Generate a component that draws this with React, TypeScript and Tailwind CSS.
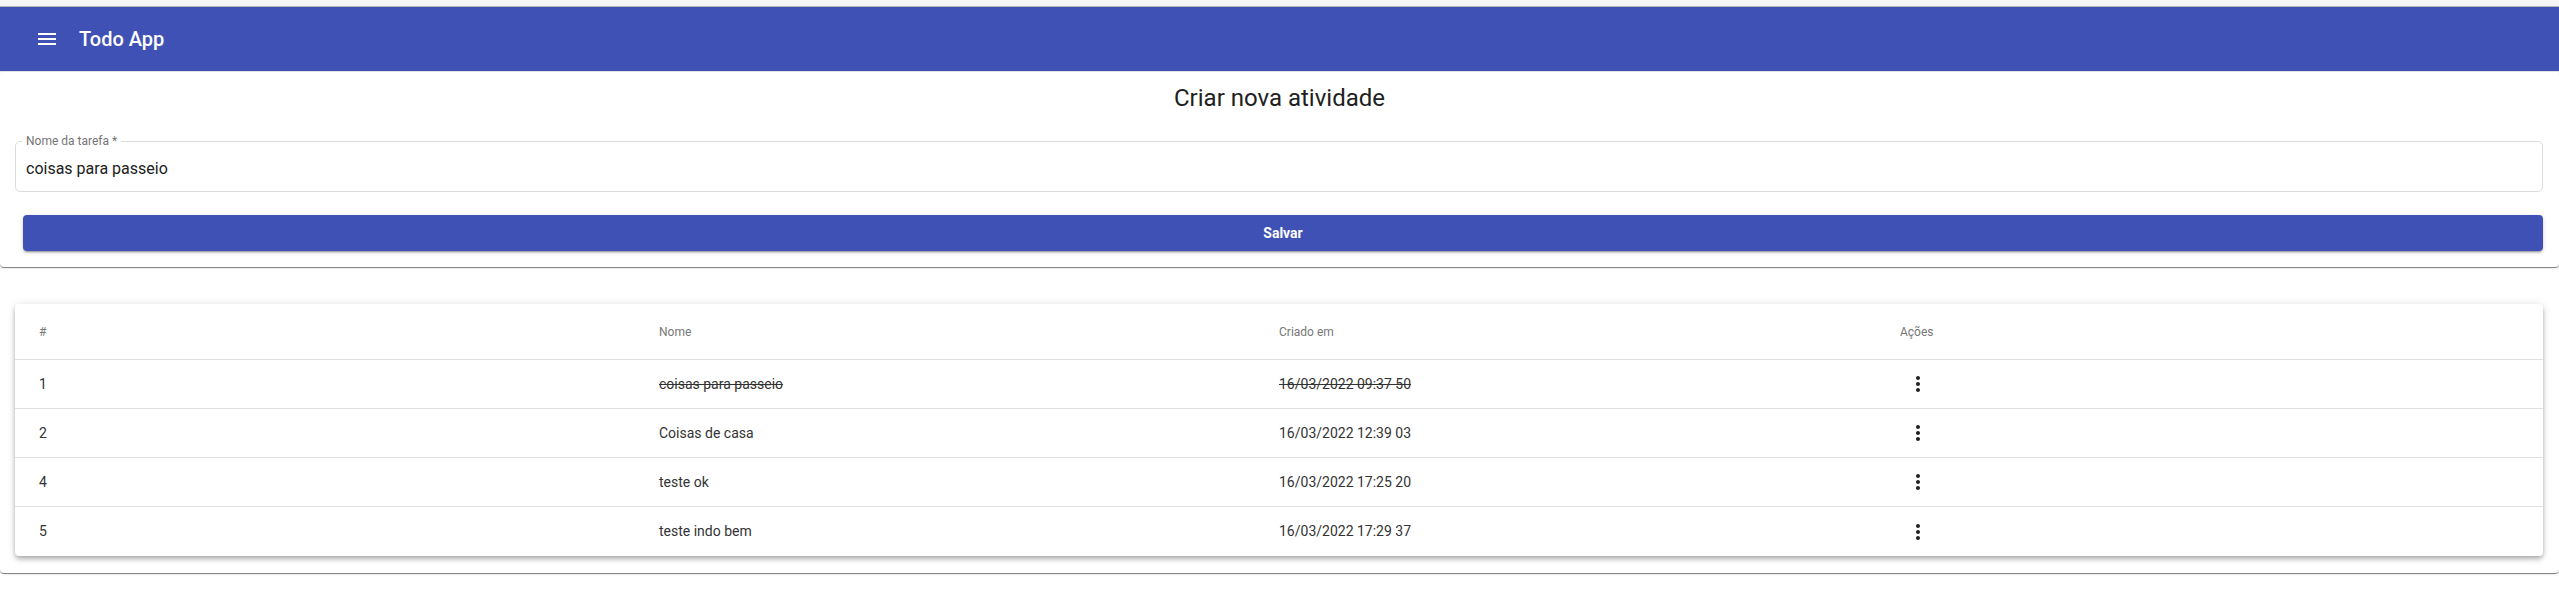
import React from "react";

const rows = [
  { id: "1", name: "coisas para passeio", date: "16/03/2022 09:37 50", done: true },
  { id: "2", name: "Coisas de casa", date: "16/03/2022 12:39 03", done: false },
  { id: "4", name: "teste ok", date: "16/03/2022 17:25 20", done: false },
  { id: "5", name: "teste indo bem", date: "16/03/2022 17:29 37", done: false },
];

function MoreVert() {
  return (
    <svg width="24" height="24" viewBox="0 0 24 24" fill="#212121">
      <path d="M12 8c1.1 0 2-.9 2-2s-.9-2-2-2-2 .9-2 2 .9 2 2 2zm0 2c-1.1 0-2 .9-2 2s.9 2 2 2 2-.9 2-2-.9-2-2-2zm0 6c-1.1 0-2 .9-2 2s.9 2 2 2 2-.9 2-2-.9-2-2-2z" />
    </svg>
  );
}

export default function App() {
  return (
    <div className="w-[2559px] h-[592px] overflow-hidden bg-white font-['Roboto','Liberation_Sans',sans-serif]">
      <div className="h-[6px] bg-[#f5f5f5]" />
      <div className="h-px bg-[#b5b5b5]" />
      <header className="relative z-20 h-[64px] bg-[#3f51b5] flex items-center border-b border-[#e3e3e3] box-content">
        <svg className="ml-[35px]" width="24" height="24" viewBox="0 0 24 24" fill="#ffffff">
          <path d="M3 18h18v-2H3v2zm0-5h18v-2H3v2zm0-7v2h18V6H3z" />
        </svg>
        <span className="ml-[20px] text-[20px] leading-8 font-medium text-white">Todo App</span>
      </header>

      <section className="relative z-10 rounded-[4px] bg-white pt-[10px] pb-4 shadow-[0px_1px_0px_0px_rgba(0,0,0,0.3),0px_2px_1px_-1px_rgba(0,0,0,0.2),0px_1px_3px_0px_rgba(0,0,0,0.12)]">
        <h2 className="text-center text-[24px] leading-8 font-normal text-[#212121]">Criar nova atividade</h2>
        <div className="relative mt-[27px] ml-[15px] mr-[16px] h-[51px] rounded-[5px] border border-[#dcdcdc]">
          <span className="absolute left-[6px] top-[-9px] px-[4px] bg-white text-[12px] leading-4 text-[#757575]">
            Nome da tarefa *
          </span>
          <div className="pl-[10px] pt-[17px] text-[16px] leading-[19px] text-[#212121]">coisas para passeio</div>
        </div>
        <button className="mt-[23px] ml-[23px] w-[2520px] h-[36px] rounded-[4px] bg-[#3f51b5] flex items-center justify-center text-white text-[14px] font-bold shadow-[0px_3px_1px_-2px_rgba(0,0,0,0.2),0px_2px_2px_0px_rgba(0,0,0,0.14),0px_1px_5px_0px_rgba(0,0,0,0.12)]">
          Salvar
        </button>
      </section>

      <section className="relative rounded-[4px] bg-white pt-[37px] pl-[15px] pr-[16px] pb-[17px] shadow-[0px_1px_0px_0px_rgba(0,0,0,0.3),0px_2px_1px_-1px_rgba(0,0,0,0.2),0px_1px_3px_0px_rgba(0,0,0,0.12)]">
        <div className="rounded-[4px] bg-white shadow-[0px_2px_4px_-1px_rgba(0,0,0,0.2),0px_4px_5px_0px_rgba(0,0,0,0.14),0px_1px_10px_0px_rgba(0,0,0,0.12)]">
          <div className="grid grid-cols-[620px_620px_621px_1fr] h-[56px] items-center border-b border-[#e0e0e0] text-[12px] text-[#777777]">
            <div className="pl-6">#</div>
            <div className="pl-6">Nome</div>
            <div className="pl-6">Criado em</div>
            <div className="pl-6">Ações</div>
          </div>
          {rows.map((r, i) => (
            <div
              key={r.id}
              className={
                "grid grid-cols-[620px_620px_621px_1fr] h-[49px] items-center text-[14px] text-[#333333] " +
                (i < rows.length - 1 ? "border-b border-[#e0e0e0]" : "")
              }
            >
              <div className="pl-6">{r.id}</div>
              <div className={r.done ? "pl-6 line-through" : "pl-6"}>{r.name}</div>
              <div className={r.done ? "pl-6 line-through" : "pl-6"}>{r.date}</div>
              <div className="pl-6 flex">
                <span className="ml-[6px] flex">
                  <MoreVert />
                </span>
              </div>
            </div>
          ))}
        </div>
      </section>
    </div>
  );
}
